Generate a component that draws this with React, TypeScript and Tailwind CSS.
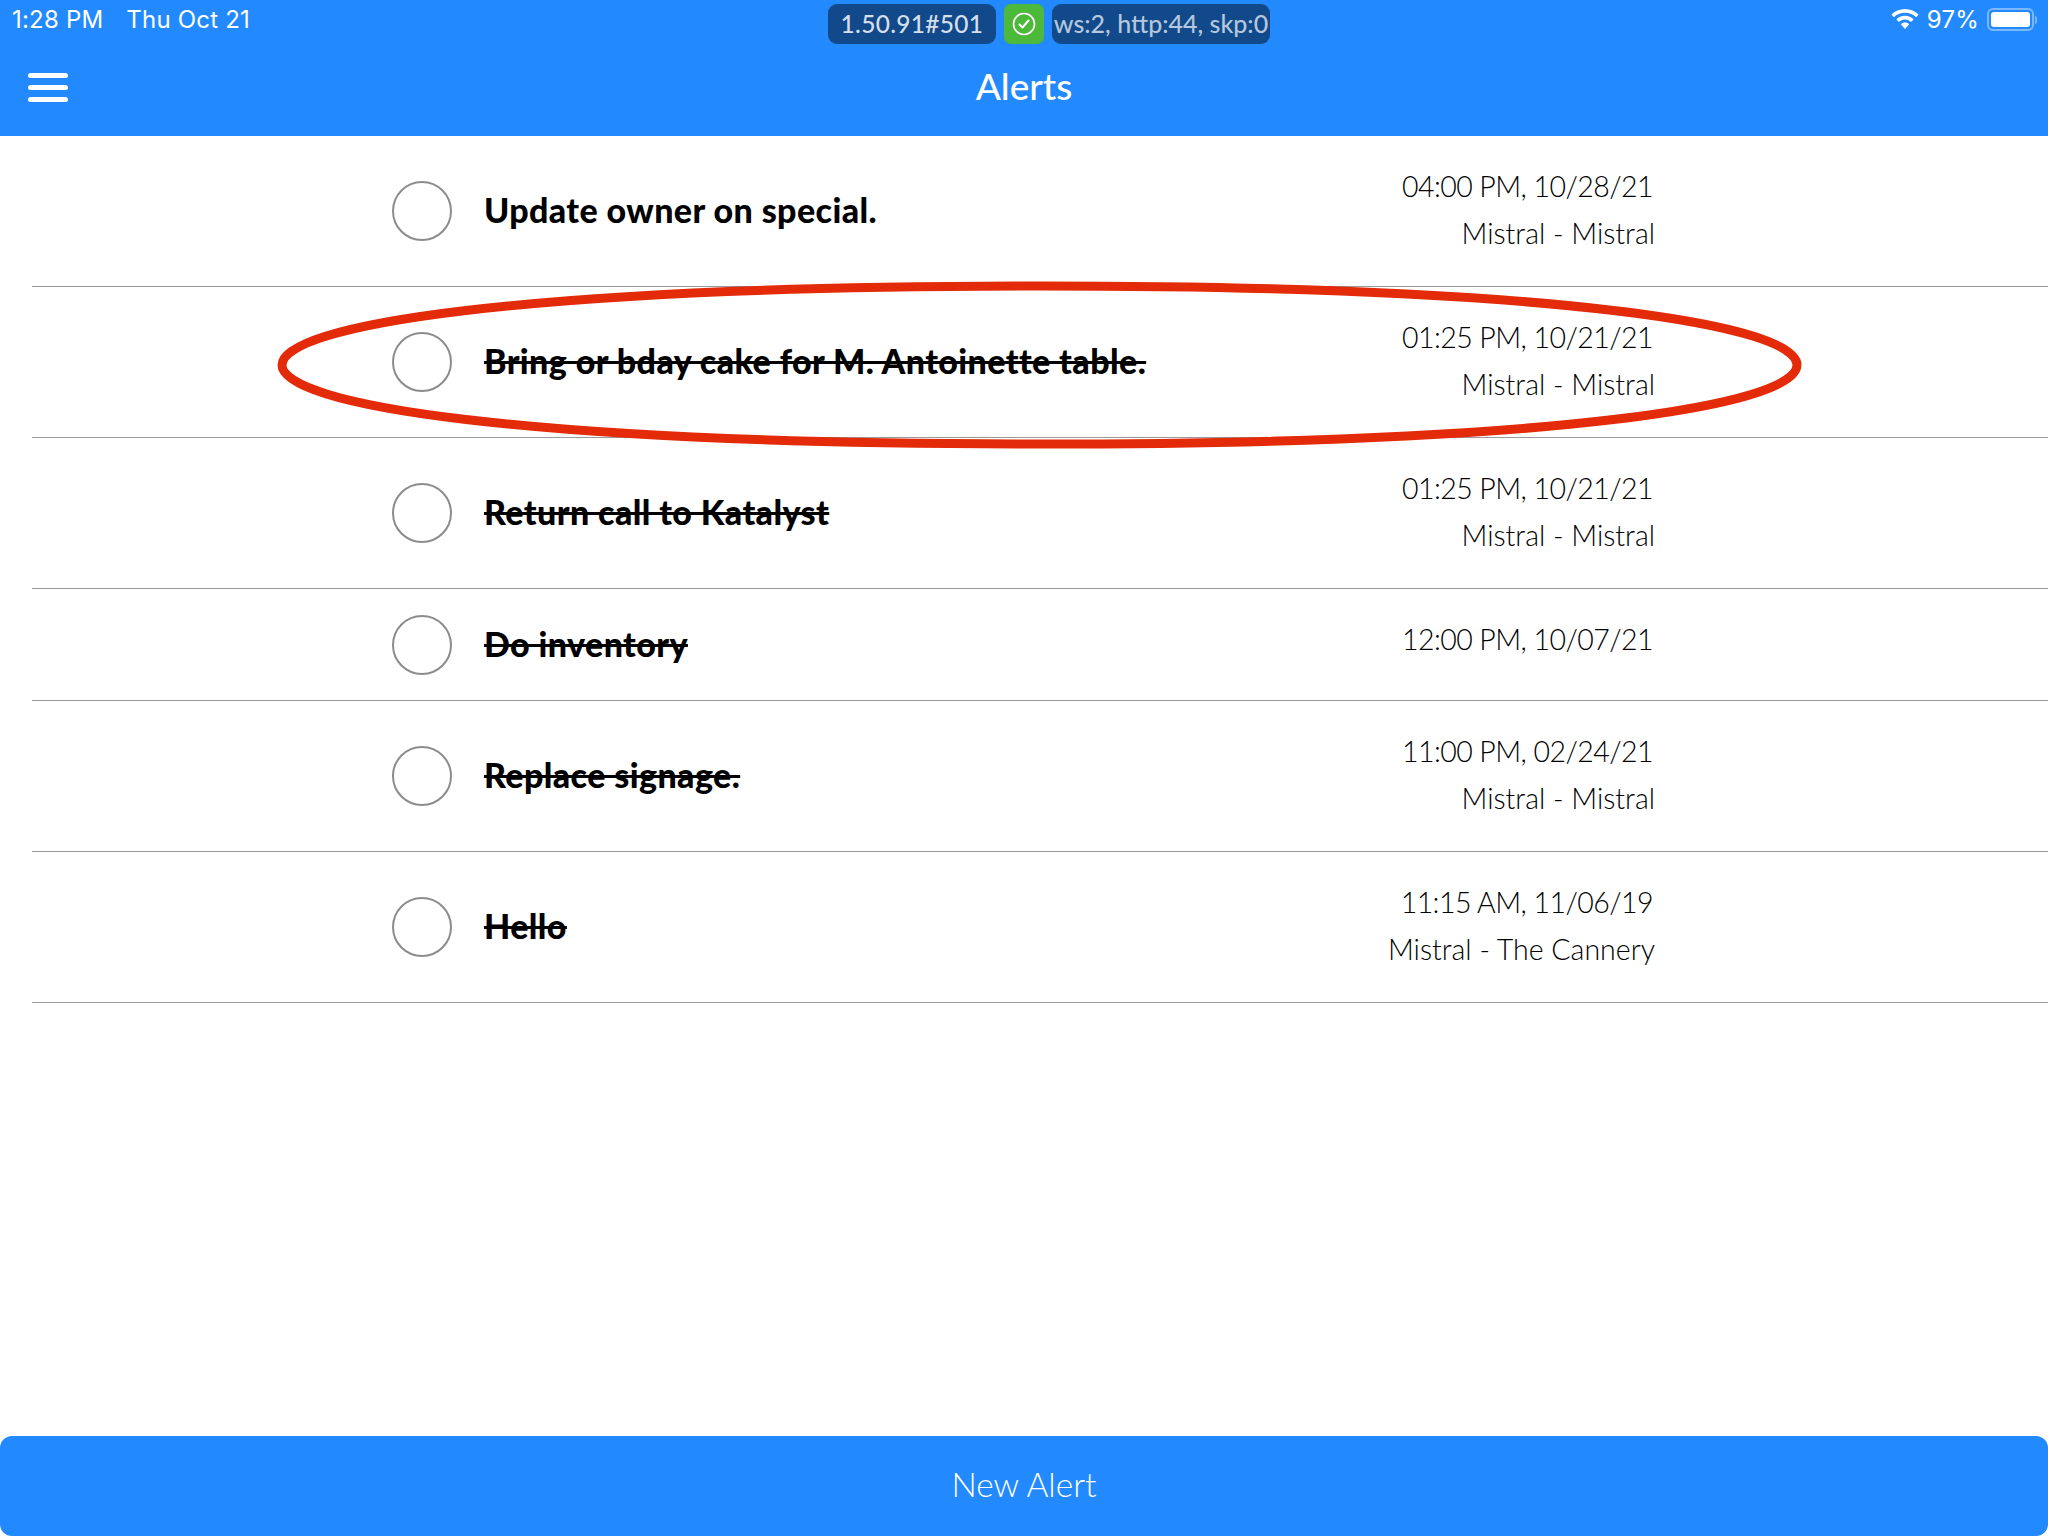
const alerts = [
  { title: "Update owner on special.", done: false, date: "04:00 PM, 10/28/21", place: "Mistral - Mistral" },
  { title: "Bring or bday cake for M. Antoinette table.", done: true, date: "01:25 PM, 10/21/21", place: "Mistral - Mistral" },
  { title: "Return call to Katalyst", done: true, date: "01:25 PM, 10/21/21", place: "Mistral - Mistral" },
  { title: "Do inventory", done: true, date: "12:00 PM, 10/07/21", place: "" },
  { title: "Replace signage.", done: true, date: "11:00 PM, 02/24/21", place: "Mistral - Mistral" },
  { title: "Hello", done: true, date: "11:15 AM, 11/06/19", place: "Mistral - The Cannery" },
]

function StatusBar() {
  return (
    <div className="flex h-[48px] pt-[4px] text-white">
      <div className="w-[828px] flex gap-[23px] pl-[12px] h-[32px] items-center font-['Inter',sans-serif] text-[24px] tracking-[0.2px] leading-none">
        <span>1:28 PM</span>
        <span>Thu Oct 21</span>
      </div>
      <div className="flex gap-[8px] h-[40px]">
        <div className="w-[168px] rounded-[9px] bg-[#11498a] flex items-center justify-center text-[24.5px] font-medium tracking-[0.3px] text-[#d5dfec] font-['Lato',sans-serif]">
          1.50.91#501
        </div>
        <div className="w-[40px] rounded-[7px] bg-[#4cb93a] flex items-center justify-center">
          <svg width="24" height="24" viewBox="0 0 24 24" fill="none" stroke="#fff">
            <circle cx="12" cy="12" r="10.5" strokeWidth="1.6" />
            <path d="M7.5 12.5l3 3 6-7" strokeWidth="2" strokeLinecap="round" strokeLinejoin="round" />
          </svg>
        </div>
        <div className="w-[218px] rounded-[9px] bg-[#11498a] flex items-center justify-center text-[25px] font-medium text-[#b4c7de] whitespace-nowrap font-['Lato',sans-serif]">
          ws:2, http:44, skp:0
        </div>
      </div>
      <div className="flex-1 flex justify-end items-start pr-[11px] pt-[4px] gap-[8px]">
        <svg width="28" height="20" viewBox="0 0 28 20" className="mt-[1px]" fill="#fff">
          <path d="M14 0C8.6 0 3.9 2.2 0.4 5.6l2.5 2.7C5.7 5.5 9.6 3.8 14 3.8s8.3 1.7 11.1 4.5l2.5-2.7C24.1 2.2 19.4 0 14 0z" />
          <path d="M14 6.8c-3.4 0-6.4 1.4-8.6 3.6l2.6 2.7c1.5-1.5 3.6-2.5 6-2.5s4.5 1 6 2.5l2.6-2.7C20.4 8.2 17.4 6.8 14 6.8z" />
          <path d="M14 13.6c-1.7 0-3.1.7-4.2 1.7L14 20l4.2-4.7c-1.1-1-2.5-1.7-4.2-1.7z" />
        </svg>
        <span className="font-['Inter',sans-serif] text-[24px] tracking-[0.2px] leading-[24px]">97%</span>
        <div className="flex items-center">
          <div className="w-[47px] h-[23px] rounded-[6px] border-2 border-white/40 p-[2px]">
            <div className="w-full h-full rounded-[3px] bg-white" />
          </div>
          <div className="w-[2px] h-[8px] rounded-r-full bg-white/40 ml-[1px]" />
        </div>
      </div>
    </div>
  )
}

function NavBar() {
  return (
    <div className="grid grid-cols-[1fr_auto_1fr] items-center h-[78px]">
      <div className="pl-[28px] flex flex-col gap-[7px]">
        <div className="w-[40px] h-[5px] rounded-full bg-white" />
        <div className="w-[40px] h-[5px] rounded-full bg-white" />
        <div className="w-[40px] h-[5px] rounded-full bg-white" />
      </div>
      <h1 className="font-['Lato',sans-serif] text-[37px] font-medium text-white -mt-[3px]">Alerts</h1>
      <div />
    </div>
  )
}

export default function App() {
  return (
    <main className="relative h-[1536px] flex flex-col bg-white overflow-hidden">
      <header className="h-[136px] bg-[#2389fe]">
        <StatusBar />
        <NavBar />
      </header>

      <div className="flex-1 pl-[32px]">
        {alerts.map((a) => (
          <div key={a.title + a.date} className={`flex border-b border-[#999999] pl-[360px] pr-[393px] ${a.place ? "h-[151px]" : "h-[112px]"}`}>
            <div className="self-center w-[60px] h-[60px] rounded-full border-2 border-[#8c8c8c] shrink-0" />
            <div
              className={`self-center ml-[32px] -mt-[3px] flex-1 whitespace-nowrap font-['Lato',sans-serif] font-black text-[34px] tracking-[0.4px] text-black ${a.done ? "line-through" : ""}`}
            >
              {a.title}
            </div>
            <div className="pt-[27px] text-right font-['Lato',sans-serif] font-light text-[28.5px] leading-[47px] text-black whitespace-nowrap">
              <div className="pr-[2px] tracking-[-0.55px]">{a.date}</div>
              {a.place && <div>{a.place}</div>}
            </div>
          </div>
        ))}
      </div>

      <button className="h-[100px] rounded-[12px] bg-[#2389fe] font-['Lato',sans-serif] font-light text-[33.5px] text-white pb-[3px]">
        New Alert
      </button>

      {/* red annotation drawn over the second row */}
      <svg className="absolute left-0 top-0 pointer-events-none" width="2048" height="500" fill="none">
        <path
          d="M282 365C282 325 520 286 1040 286C1560 286 1797 325 1797 365C1797 405 1560 444 1040 444C520 444 282 405 282 365Z"
          stroke="#e32a09"
          strokeWidth="9"
        />
      </svg>
    </main>
  )
}
